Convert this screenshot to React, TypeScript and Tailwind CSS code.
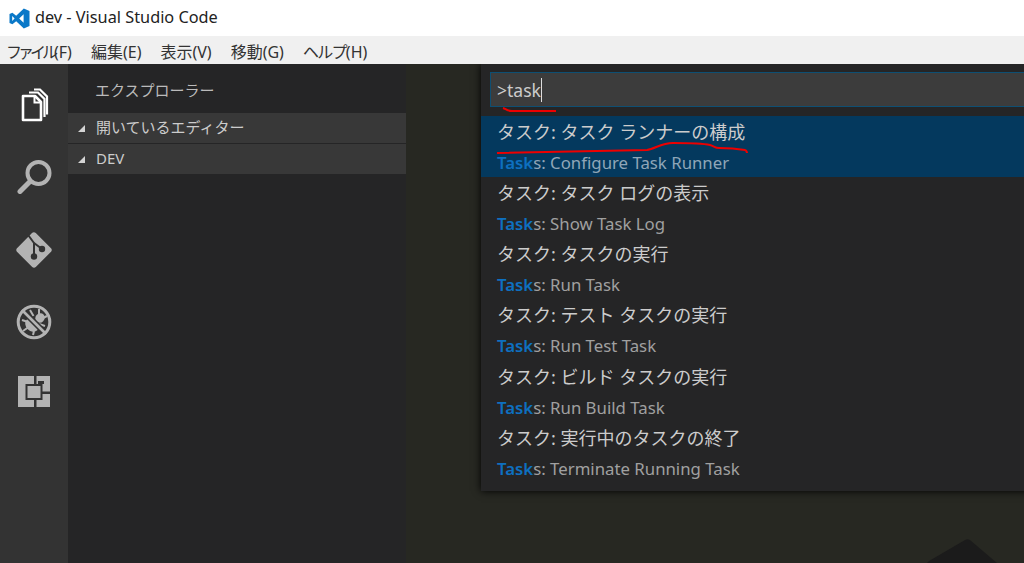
const FONT = "font-['Noto_Sans','Noto_Sans_CJK_JP',sans-serif]";

const menus = [
  { name: 'ファイル', key: '(F)', cls: 'tracking-[-4px]' },
  { name: '編集', key: '(E)', cls: '' },
  { name: '表示', key: '(V)', cls: '' },
  { name: '移動', key: '(G)', cls: '' },
  { name: 'ヘルプ', key: '(H)', cls: 'tracking-[-1.7px]' },
];

const tasks = [
  { ja: 'タスク: タスク ランナーの構成', en: ': Configure Task Runner', active: true },
  { ja: 'タスク: タスク ログの表示', en: ': Show Task Log' },
  { ja: 'タスク: タスクの実行', en: ': Run Task' },
  { ja: 'タスク: テスト タスクの実行', en: ': Run Test Task' },
  { ja: 'タスク: ビルド タスクの実行', en: ': Run Build Task' },
  { ja: 'タスク: 実行中のタスクの終了', en: ': Terminate Running Task' },
];

function VsCodeLogo() {
  return (
    <svg width="21" height="21" viewBox="0 0 21 21">
      <path
        fill="#0a78c8"
        d="M14.800 0.500 20.500 3v15l-5.700 2.500-7.600-7.200-3.800 2.900L0.500 15V6l2.900-1.200 3.800 2.900zM3.200 8v5l2.400-2.500zM14.600 6.300l-4.400 4.200 4.400 4.200z"
      />
    </svg>
  );
}

function FilesIcon() {
  return (
    <svg width="28" height="34" viewBox="0 0 28 34" fill="none" stroke="#fff">
      <path d="M2 8h12l6 6v18H2z" strokeWidth="2.600" strokeLinejoin="round" />
      <path d="M13.500 8v6.500H20" strokeWidth="2" />
      <path d="M8 4.500h9l6.500 6.500v18" strokeWidth="2.200" />
      <path d="M13 1.500h6l7 7v18" strokeWidth="2.200" />
    </svg>
  );
}

function SearchIcon() {
  return (
    <svg width="35" height="34" viewBox="0 0 35 34" fill="none" stroke="#b3b3b3">
      <circle cx="21.500" cy="13" r="11" strokeWidth="4" />
      <path d="M13 21.500 3 31.500" strokeWidth="5" strokeLinecap="round" />
    </svg>
  );
}

function GitIcon() {
  return (
    <svg width="36" height="36" viewBox="0 0 36 36">
      <path
        fill="#b3b3b3"
        d="M16 1 1 16.200c-1 1-1 2.600 0 3.600L16.200 35c1 1 2.600 1 3.600 0L35 19.800c1-1 1-2.600 0-3.600L19.800 1c-1-1-2.800-1-3.800 0z"
      />
      <g stroke="#333333" strokeWidth="2" fill="none">
        <path d="M12.500 3.500 18 11v13" />
        <path d="M18 11l8 6" />
      </g>
      <circle cx="18" cy="24.500" r="3.200" fill="#333333" />
      <circle cx="26" cy="17" r="3.200" fill="#333333" />
    </svg>
  );
}

function NoBugIcon() {
  return (
    <svg width="36" height="36" viewBox="0 0 36 36" fill="none">
      <ellipse cx="16" cy="21" rx="6" ry="7.500" fill="#b3b3b3" transform="rotate(-45 16 21)" />
      <ellipse cx="24" cy="14" rx="5" ry="4.500" fill="#b3b3b3" transform="rotate(-45 24 14)" />
      <path
        d="M14 6l3.500 6M23 5v6M31 12l-5 2.500M6 16l6 2M7 27l5-3.500M17 31l1-4M29 22l-6-2"
        stroke="#b3b3b3"
        strokeWidth="2"
      />
      <path d="M6 6l24 24" stroke="#333333" strokeWidth="6" />
      <path d="M6 6l24 24" stroke="#b3b3b3" strokeWidth="2.600" />
      <circle cx="18" cy="18" r="15.800" stroke="#b3b3b3" strokeWidth="3" />
    </svg>
  );
}

function ExtensionsIcon() {
  return (
    <svg width="32" height="31" viewBox="0 0 32 31">
      <rect width="32" height="31" fill="#b3b3b3" />
      <rect x="16" y="0" width="2.500" height="8" fill="#333333" />
      <rect x="20" y="5" width="6" height="3" fill="#333333" />
      <rect x="23" y="15.500" width="9" height="2.500" fill="#333333" />
      <rect x="16" y="23" width="2.500" height="8" fill="#333333" />
      <rect x="7.500" y="8" width="17" height="16" fill="#333333" />
      <rect x="9.500" y="10" width="13" height="12" fill="#b3b3b3" />
    </svg>
  );
}

function SectionRow({ label }: { label: string }) {
  return (
    <div className="h-[30px] bg-[#383838] flex items-center mb-px">
      <span className="ml-[10px] w-0 h-0 border-l-[7px] border-l-transparent border-b-[7px] border-b-[#d4d4d4]" />
      <span className="ml-[11px] -mt-[2px] text-[15px] text-[#cccccc]">{label}</span>
    </div>
  );
}

export default function App() {
  return (
    <div className={`w-[1024px] h-[563px] overflow-hidden flex flex-col bg-white ${FONT}`}>
      <div className="h-[36px] flex items-center pl-[9px] gap-[5px] bg-white">
        <VsCodeLogo />
        <span className="text-[16.3px] text-[#222222] -mt-[2px]">dev - Visual Studio Code</span>
      </div>
      <div className="h-[28px] bg-[#f0f0f0] flex items-center pl-[6px] pt-[4px] gap-[19px] text-[16px] text-[#333333]">
        {menus.map((m) => (
          <span key={m.key}>
            <span className={m.cls}>{m.name}</span>
            {m.key}
          </span>
        ))}
      </div>

      <div className="flex-1 flex min-h-0">
        <div className="w-[68px] bg-[#333333] flex flex-col items-center">
          <div className="mt-[24px] h-[34px] ml-[2px]"><FilesIcon /></div>
          <div className="mt-[38px] h-[34px]"><SearchIcon /></div>
          <div className="mt-[38px] h-[36px]"><GitIcon /></div>
          <div className="mt-[36px] h-[36px]"><NoBugIcon /></div>
          <div className="mt-[36px] h-[31px]"><ExtensionsIcon /></div>
        </div>

        <div className="w-[338px] bg-[#252526]">
          <div className="h-[49px] pl-[27px] pt-[15px] text-[15px] text-[#bbbbbb]">エクスプローラー</div>
          <SectionRow label="開いているエディター" />
          <SectionRow label="DEV" />
        </div>

        <div className="flex-1 bg-[#272822] relative overflow-hidden">
          <svg className="absolute left-[515px] bottom-0" width="80" height="26" viewBox="0 0 80 26">
            <path d="M8 24 44 3c2-1 3-1 5 0l27 23H6z" fill="#1b1b1b" />
          </svg>
          <div className="absolute left-[75px] top-0 w-[560px] h-[427px] bg-[#252526] shadow-[0_0_8px_#000000] pt-[8px] pl-[9px]">
            <div className="relative h-[35px] bg-[#3c3c3c] border border-[#0e4f73] pl-[6px] pt-[1px] flex items-center text-[17.500px] text-[#cccccc]">
              <span>&gt;task</span>
              <span className="w-px h-[24px] bg-[#dddddd]" />
              <svg className="absolute left-[11px] top-[33px]" width="60" height="8" viewBox="0 0 60 8" fill="none">
                <path d="M1 2c3 1 4 3 9 3 12 0 24 0 44 0" stroke="#ee0000" strokeWidth="2" />
              </svg>
            </div>
            <div className="-ml-[9px] mt-[9px]">
              {tasks.map((t) => (
                <div
                  key={t.en}
                  className={`relative h-[61.2px] pl-[16px] ${t.active ? 'bg-[#04395e]' : ''}`}
                >
                  <div className="h-[30.6px] pt-[2px] flex items-center text-[18px] text-[#cccccc]">{t.ja}</div>
                  <div className={`h-[30.6px] pt-[1px] flex items-center text-[16.800px] ${t.active ? 'text-[#8fa6b8]' : 'text-[#a0a0a0]'}`}>
                    <span className="font-semibold text-[#0e70c0]">Task</span>
                    <span>s{t.en}</span>
                  </div>
                  {t.active && (
                    <svg className="absolute left-[15px] top-[21px]" width="256" height="20" viewBox="0 0 256 20" fill="none">
                      <path
                        d="M1 16c60-1 110-2 150-3 8-1 14-7 26-7 14 0 28 0 37 2 4 1 5 3 9 3 10 0 20 1 26 2 1 0 2 2 2 3"
                        stroke="#ee0000"
                        strokeWidth="2"
                      />
                    </svg>
                  )}
                </div>
              ))}
            </div>
          </div>
        </div>
      </div>
    </div>
  );
}
